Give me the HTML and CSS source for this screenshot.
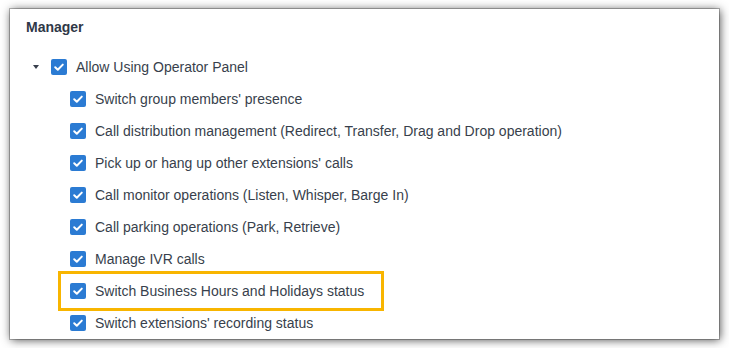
FILE: index.html
```html
<!DOCTYPE html>
<html lang="en">
<head>
    <meta charset="UTF-8">
    <title>Manager</title>
    <link rel="stylesheet" href="styles.css">
</head>
<body>

    <div class="panel">
        <h3 class="panel-title">Manager</h3>

        <div class="tree">
            <div class="tree-row parent">
                <span class="caret"></span>
                <span class="check"><svg viewBox="0 0 16 16" width="16" height="16"><path d="M4.2 8.3l2.6 2.5 5-5.2" fill="none" stroke="#fff" stroke-width="2" stroke-linecap="round" stroke-linejoin="round"/></svg></span>
                <span class="label">Allow Using Operator Panel</span>
            </div>

            <div class="children">
                <div class="tree-row">
                    <span class="check"><svg viewBox="0 0 16 16" width="16" height="16"><path d="M4.2 8.3l2.6 2.5 5-5.2" fill="none" stroke="#fff" stroke-width="2" stroke-linecap="round" stroke-linejoin="round"/></svg></span>
                    <span class="label">Switch group members' presence</span>
                </div>
                <div class="tree-row">
                    <span class="check"><svg viewBox="0 0 16 16" width="16" height="16"><path d="M4.2 8.3l2.6 2.5 5-5.2" fill="none" stroke="#fff" stroke-width="2" stroke-linecap="round" stroke-linejoin="round"/></svg></span>
                    <span class="label">Call distribution management (Redirect, Transfer, Drag and Drop operation)</span>
                </div>
                <div class="tree-row">
                    <span class="check"><svg viewBox="0 0 16 16" width="16" height="16"><path d="M4.2 8.3l2.6 2.5 5-5.2" fill="none" stroke="#fff" stroke-width="2" stroke-linecap="round" stroke-linejoin="round"/></svg></span>
                    <span class="label">Pick up or hang up other extensions' calls</span>
                </div>
                <div class="tree-row">
                    <span class="check"><svg viewBox="0 0 16 16" width="16" height="16"><path d="M4.2 8.3l2.6 2.5 5-5.2" fill="none" stroke="#fff" stroke-width="2" stroke-linecap="round" stroke-linejoin="round"/></svg></span>
                    <span class="label">Call monitor operations (Listen, Whisper, Barge In)</span>
                </div>
                <div class="tree-row">
                    <span class="check"><svg viewBox="0 0 16 16" width="16" height="16"><path d="M4.2 8.3l2.6 2.5 5-5.2" fill="none" stroke="#fff" stroke-width="2" stroke-linecap="round" stroke-linejoin="round"/></svg></span>
                    <span class="label">Call parking operations (Park, Retrieve)</span>
                </div>
                <div class="tree-row">
                    <span class="check"><svg viewBox="0 0 16 16" width="16" height="16"><path d="M4.2 8.3l2.6 2.5 5-5.2" fill="none" stroke="#fff" stroke-width="2" stroke-linecap="round" stroke-linejoin="round"/></svg></span>
                    <span class="label">Manage IVR calls</span>
                </div>
                <!-- 高亮的一行 -->
                <div class="tree-row highlight">
                    <span class="check"><svg viewBox="0 0 16 16" width="16" height="16"><path d="M4.2 8.3l2.6 2.5 5-5.2" fill="none" stroke="#fff" stroke-width="2" stroke-linecap="round" stroke-linejoin="round"/></svg></span>
                    <span class="label">Switch Business Hours and Holidays status</span>
                </div>
                <div class="tree-row">
                    <span class="check"><svg viewBox="0 0 16 16" width="16" height="16"><path d="M4.2 8.3l2.6 2.5 5-5.2" fill="none" stroke="#fff" stroke-width="2" stroke-linecap="round" stroke-linejoin="round"/></svg></span>
                    <span class="label">Switch extensions' recording status</span>
                </div>
            </div>
        </div>
    </div>

</body>
</html>
```

FILE: styles.css
```css
/* 页面背景 */
body {
    margin: 0;
    background: #fff;
    font-family: "Liberation Sans", Arial, sans-serif;
    color: #383f4c;
}

/* 面板 */
.panel {
    margin: 9px 10px;
    width: 709px;
    height: 330px;
    box-sizing: border-box;
    padding: 8px 16px 0;
    background: #fff;
    overflow: hidden;
    box-shadow: 0 0 0 1px rgba(0, 0, 0, 0.25), 1px 1px 9px rgba(0, 0, 0, 0.7);
}

/* 标题 */
.panel-title {
    margin: 0;
    font-size: 14px;
    line-height: 20px;
    font-weight: bold;
    color: #2f3847;
}

.tree {
    margin-top: 14px;
}

/* 每一行 */
.tree-row {
    display: flex;
    align-items: center;
    height: 32px;
    font-size: 14px;
}

.tree-row.parent {
    padding-left: 7px;
}

.children {
    padding-left: 44px;
}

/* 下拉箭头 */
.caret {
    width: 0;
    height: 0;
    border-left: 3.5px solid transparent;
    border-right: 3.5px solid transparent;
    border-top: 4px solid #383f4c;
    margin-right: 12px;
}

/* 复选框 */
.check {
    width: 16px;
    height: 16px;
    border-radius: 2px;
    background: #2b7bd3;
    margin-right: 9px;
    display: flex;
}

/* 高亮框 */
.highlight {
    position: relative;
    width: fit-content;
}

.highlight::after {
    content: "";
    position: absolute;
    left: -12px;
    right: -20px;
    top: -4px;
    bottom: -4px;
    border: 3.5px solid #f8b500;
}
```
